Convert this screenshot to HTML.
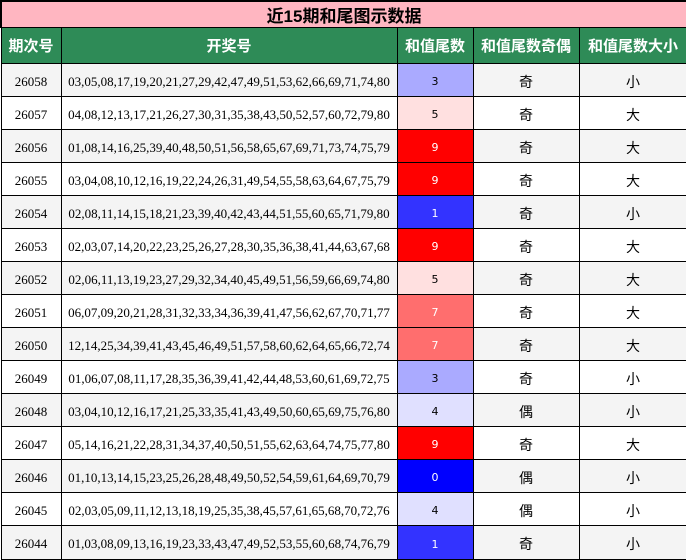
<!DOCTYPE html>
<html><head><meta charset="utf-8"><style>
*{margin:0;padding:0;box-sizing:border-box}
body{width:686px;height:560px;background:#fff;overflow:hidden;font-family:"Liberation Serif","Noto Serif CJK SC",serif}
table{border-collapse:collapse;table-layout:fixed;width:686px;position:absolute;left:0;top:0}
td,th{border:1px solid #000;text-align:center;padding:0;overflow:hidden;white-space:nowrap}
.t td{height:25px;background:#ffb6c1;font-size:17px;font-weight:bold;font-family:"Liberation Sans","Noto Sans CJK SC",sans-serif;border-width:2px 2px 1px 2px}
.h th{height:36px;background:#2e8b57;color:#fff;font-size:15px;font-family:"Liberation Sans","Noto Sans CJK SC",sans-serif}
tr.r td{height:33px;font-size:13px;padding-top:3px}
tr.r.last td{height:34px}
tr.r:nth-child(odd) td{background:#f4f4f4}
tr.r:nth-child(even) td{background:#fff}
tr.r td.v{font-family:"DejaVu Sans",sans-serif;font-size:11px}
tr.r td.c{font-family:"Liberation Sans","Noto Sans CJK SC",sans-serif;font-size:14px}
tr.r td.s3{background:#aaaaff}tr.r td.s5{background:#ffe0e0}tr.r td.s9{background:#ff0000;color:#fff}
tr.r td.s1{background:#3333ff;color:#fff}tr.r td.s7{background:#ff6e6e;color:#fff}tr.r td.s4{background:#e0e0ff}tr.r td.s0{background:#0000ff;color:#fff}
</style></head><body>
<table>
<colgroup><col style="width:60px"><col style="width:336px"><col style="width:76px"><col style="width:106px"><col style="width:108px"></colgroup>
<tr class="t"><td colspan="5">近15期和尾图示数据</td></tr>
<tr class="h"><th>期次号</th><th>开奖号</th><th>和值尾数</th><th>和值尾数奇偶</th><th>和值尾数大小</th></tr>
<tr class="r"><td>26058</td><td>03,05,08,17,19,20,21,27,29,42,47,49,51,53,62,66,69,71,74,80</td><td class="v s3">3</td><td class="c">奇</td><td class="c">小</td></tr>
<tr class="r"><td>26057</td><td>04,08,12,13,17,21,26,27,30,31,35,38,43,50,52,57,60,72,79,80</td><td class="v s5">5</td><td class="c">奇</td><td class="c">大</td></tr>
<tr class="r"><td>26056</td><td>01,08,14,16,25,39,40,48,50,51,56,58,65,67,69,71,73,74,75,79</td><td class="v s9">9</td><td class="c">奇</td><td class="c">大</td></tr>
<tr class="r"><td>26055</td><td>03,04,08,10,12,16,19,22,24,26,31,49,54,55,58,63,64,67,75,79</td><td class="v s9">9</td><td class="c">奇</td><td class="c">大</td></tr>
<tr class="r"><td>26054</td><td>02,08,11,14,15,18,21,23,39,40,42,43,44,51,55,60,65,71,79,80</td><td class="v s1">1</td><td class="c">奇</td><td class="c">小</td></tr>
<tr class="r"><td>26053</td><td>02,03,07,14,20,22,23,25,26,27,28,30,35,36,38,41,44,63,67,68</td><td class="v s9">9</td><td class="c">奇</td><td class="c">大</td></tr>
<tr class="r"><td>26052</td><td>02,06,11,13,19,23,27,29,32,34,40,45,49,51,56,59,66,69,74,80</td><td class="v s5">5</td><td class="c">奇</td><td class="c">大</td></tr>
<tr class="r"><td>26051</td><td>06,07,09,20,21,28,31,32,33,34,36,39,41,47,56,62,67,70,71,77</td><td class="v s7">7</td><td class="c">奇</td><td class="c">大</td></tr>
<tr class="r"><td>26050</td><td>12,14,25,34,39,41,43,45,46,49,51,57,58,60,62,64,65,66,72,74</td><td class="v s7">7</td><td class="c">奇</td><td class="c">大</td></tr>
<tr class="r"><td>26049</td><td>01,06,07,08,11,17,28,35,36,39,41,42,44,48,53,60,61,69,72,75</td><td class="v s3">3</td><td class="c">奇</td><td class="c">小</td></tr>
<tr class="r"><td>26048</td><td>03,04,10,12,16,17,21,25,33,35,41,43,49,50,60,65,69,75,76,80</td><td class="v s4">4</td><td class="c">偶</td><td class="c">小</td></tr>
<tr class="r"><td>26047</td><td>05,14,16,21,22,28,31,34,37,40,50,51,55,62,63,64,74,75,77,80</td><td class="v s9">9</td><td class="c">奇</td><td class="c">大</td></tr>
<tr class="r"><td>26046</td><td>01,10,13,14,15,23,25,26,28,48,49,50,52,54,59,61,64,69,70,79</td><td class="v s0">0</td><td class="c">偶</td><td class="c">小</td></tr>
<tr class="r"><td>26045</td><td>02,03,05,09,11,12,13,18,19,25,35,38,45,57,61,65,68,70,72,76</td><td class="v s4">4</td><td class="c">偶</td><td class="c">小</td></tr>
<tr class="r last"><td>26044</td><td>01,03,08,09,13,16,19,23,33,43,47,49,52,53,55,60,68,74,76,79</td><td class="v s1">1</td><td class="c">奇</td><td class="c">小</td></tr>
</table>
</body></html>
